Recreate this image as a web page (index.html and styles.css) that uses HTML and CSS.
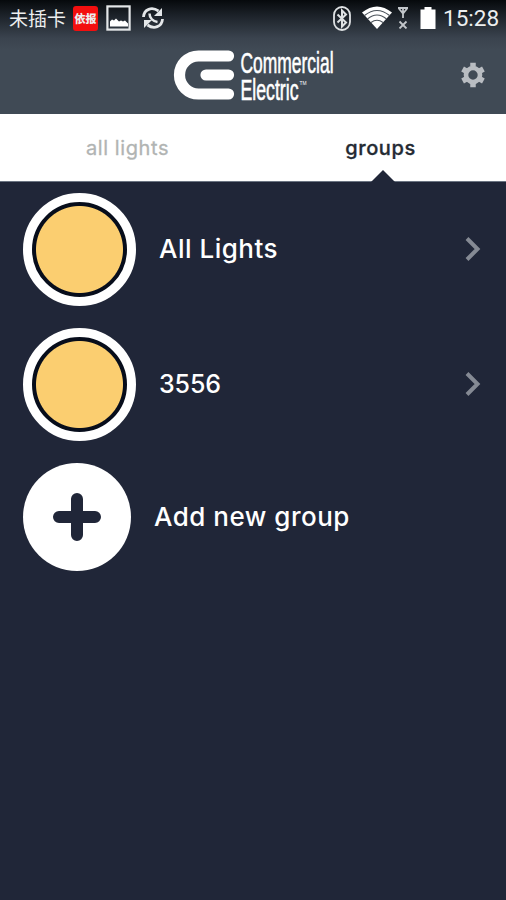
FILE: index.html
```html
<!DOCTYPE html>
<html lang="en">
  <head>
    <title>Commercial Electric</title>
    <meta charset="utf-8">
    <link rel="stylesheet" href="styles.css">
  </head>
  <body>

  <header id="top">
    <div id="status">
      <span class="carrier">未插卡</span>
      <span class="news">依报</span>
      <svg class="picture" width="25" height="26" viewBox="0 0 25 26">
        <rect x="1.4" y="1.4" width="22.2" height="23.2" fill="none" stroke="#e4e7e9" stroke-width="2.2"/>
        <path d="M4 21.500v-5l2-2 2 1 2-2 3 3 2-1 2 1 2-1 3 3v3z" fill="#fff"/>
      </svg>
      <svg class="sync" width="24" height="24" viewBox="0 0 24 24" fill="none" stroke="#e4e7e9" stroke-width="2.8">
        <path d="M2.500 11C3 3 11 .5 17.500 5M21.500 13C21 21 13 23.500 6.500 19"/>
        <path d="M21 2v8h-8zM3 22v-8h8z" fill="#e4e7e9" stroke="none"/>
        <path d="M8.500 7.500c0 4.500 3.500 8 8 8.500" stroke-width="2.500"/>
      </svg>
      <span class="fill"></span>
      <svg class="bluetooth" width="18" height="25" viewBox="0 0 18 25" fill="none" stroke="#dfe2e4">
        <rect x="1" y="1" width="16" height="23" rx="8" stroke-width="1.800"/>
        <path d="M4.500 8.500l8.500 8-4 4v-16l4 4-8.500 8" stroke-width="2"/>
      </svg>
      <svg class="wifi" width="30" height="23" viewBox="0 0 30 23">
        <path d="M0 6.500Q15-5.500 30 6.500L15 23z" fill="#fff"/>
        <path d="M2.500 9.500Q15-.5 27.500 9.500M5.500 13Q15 5 24.500 13M9 16.500Q15 12 21 16.500" fill="none" stroke="#4a5159" stroke-width="1.100"/>
      </svg>
      <svg class="signal" width="10" height="22" viewBox="0 0 10 22" fill="none" stroke="#c3c7cb" stroke-width="1.800">
        <path d="M.5 1h9L5 6.500zM5 1v10M1.500 14.500l7 7m0-7l-7 7"/>
      </svg>
      <svg class="battery" width="16" height="22" viewBox="0 0 16 22">
        <path d="M4.500 0h7v2.500H15.500V22H.5V2.500h4z" fill="#fff"/>
      </svg>
      <span class="clock">15:28</span>
    </div>

    <div id="bar">
      <svg class="logo" width="168" height="68" viewBox="-1 -6 168 68">
        <path d="M54.500 9H24.500a19 19 0 0 0 0 38H54.500M32 28h22.500" fill="none" stroke="#fff" stroke-width="11.200" stroke-linecap="round"/>
        <text x="66.500" y="26" textLength="93" lengthAdjust="spacingAndGlyphs">Commercial</text>
        <text x="66.500" y="52.500" textLength="58" lengthAdjust="spacingAndGlyphs">Electric</text>
        <text class="tm" x="125.500" y="38" textLength="7" lengthAdjust="spacingAndGlyphs">TM</text>
      </svg>
      <svg class="gear" width="26" height="26" viewBox="-13 -13 26 26">
        <g fill="none" stroke="#b9bdc2">
          <circle r="7" stroke-width="4.600"/>
          <path d="M0-12.200v4M0 12.200v-4M10.400-6l-3.500 2M-10.400-6l3.500 2M10.400 6l-3.500-2M-10.400 6l3.500-2" stroke-width="5.500"/>
        </g>
      </svg>
    </div>
  </header>

  <div id="tabs">
    <a class="tab">all lights</a>
    <a class="tab active">groups</a>
  </div>

  <div id="groups">
    <div class="group">
      <span class="light"></span>
      <span class="name">All Lights</span>
      <svg class="arrow" width="16" height="26" viewBox="0 0 16 26"><path d="M2 2.500L12.500 13 2 23.500"/></svg>
    </div>
    <div class="group">
      <span class="light"></span>
      <span class="name number">3556</span>
      <svg class="arrow" width="16" height="26" viewBox="0 0 16 26"><path d="M2 2.500L12.500 13 2 23.500"/></svg>
    </div>
    <div class="group add">
      <svg width="108" height="108" viewBox="0 0 108 108">
        <circle cx="54" cy="54" r="54" fill="#fff"/>
        <path d="M54 36v36M36 54h36" stroke="#202638" stroke-width="12" stroke-linecap="round"/>
      </svg>
      <span class="name">Add new group</span>
    </div>
  </div>

  </body>
</html>
```
FILE: styles.css
```css
      html {
        height: 100%;
      }
      body {
        margin: 0;
        padding: 0;
        height: 100%;
        overflow: hidden;
        background: #202638;
        color: #fff;
        font-family: Inter, "Noto Sans CJK SC", sans-serif;
      }
      #top {
        height: 114px;
        background: linear-gradient(#06090c 0, #1d232a 16px, #3a434e 38px, #404a55 50px);
      }
      #status {
        display: flex;
        align-items: center;
        height: 36px;
        padding: 0 8px 0 9px;
        color: #eceeef;
      }
      #status svg, #status span {
        flex-shrink: 0;
      }
      .carrier {
        width: 64px;
        font: 19px "Noto Sans CJK SC", sans-serif;
        line-height: 36px;
      }
      .news {
        width: 25px;
        height: 25px;
        border-radius: 3px;
        background: #f30f0f;
        font: 900 11px "Noto Sans CJK SC", sans-serif;
        line-height: 25px;
        text-align: center;
      }
      .picture {
        margin-left: 8px;
      }
      .sync {
        margin-left: 10px;
      }
      #status .fill {
        flex: 1;
      }
      #status .wifi {
        margin: -2px 0 0 11px;
      }
      .signal {
        margin-left: 6px;
      }
      .battery {
        margin: 0 7px 0 12px;
      }
      .clock {
        width: 55px;
        font: 22.5px Roboto, sans-serif;
        line-height: 38px;
        white-space: nowrap;
      }
      #bar {
        display: flex;
        align-items: center;
        justify-content: space-between;
        height: 77px;
        padding: 0 20px 0 173px;
      }
      .logo text {
        fill: #fff;
        stroke: #fff;
        stroke-width: .6px;
        font: 29px "Liberation Sans Narrow", "Liberation Sans", sans-serif;
      }
      .logo .tm {
        stroke: none;
        font-size: 5px;
      }
      #tabs {
        display: flex;
        height: 67px;
        background: #fff;
        border-bottom: 1px solid #6b7482;
      }
      .tab {
        position: relative;
        flex: 1;
        text-align: center;
        text-indent: 2px;
        font-size: 20px;
        line-height: 69px;
        letter-spacing: .6px;
        color: #b1b4b3;
        -webkit-text-stroke: .3px;
      }
      .tab.active {
        color: #242a33;
        font-weight: 500;
      }
      /* notch under the selected tab */
      .tab.active:after {
        content: "";
        position: absolute;
        left: 118px;
        bottom: -1px;
        border: 12px solid transparent;
        border-top: 0;
        border-bottom-color: #202638;
      }
      #groups {
        padding: 11px 25px 0 23px;
      }
      .group {
        display: flex;
        align-items: center;
        height: 113px;
        margin-bottom: 22px;
      }
      .light {
        box-sizing: border-box;
        width: 113px;
        height: 113px;
        border: 9px solid #fff;
        border-radius: 50%;
        background: radial-gradient(circle, #fbce70 43px, #070d1b 44px);
      }
      .name {
        flex: 1;
        margin-left: 23px;
        padding-bottom: 2px;
        font-size: 26px;
        font-weight: 500;
        line-height: 36px;
        letter-spacing: .5px;
      }
      .number {
        font-size: 25px;
        letter-spacing: -.1px;
      }
      .arrow {
        margin-bottom: 2px;
        fill: none;
        stroke: #858a94;
        stroke-width: 4;
      }
      .add {
        height: 108px;
      }
      .add .name {
        padding-bottom: 0;
      }
```
